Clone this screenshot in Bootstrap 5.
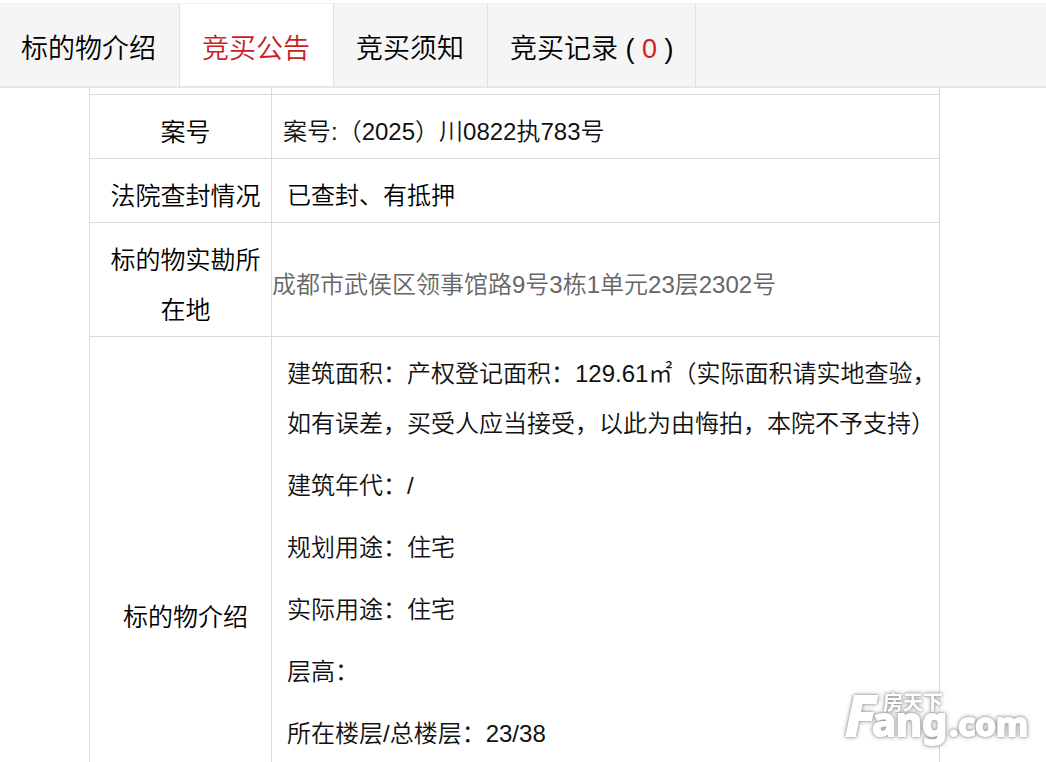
<!DOCTYPE html>
<html lang="zh-CN">
<head>
<meta charset="utf-8">
<meta name="viewport" content="width=device-width, initial-scale=1">
<title>竞买公告</title>
<link href="https://cdn.jsdelivr.net/npm/bootstrap@5.3.0/dist/css/bootstrap.min.css" rel="stylesheet">
<style>
  body { font-family: "Liberation Sans", "Noto Sans CJK SC", sans-serif; color: #111; font-size: 24px; line-height: 50px; font-weight: 350; }
  .notice-tabs { background: #f5f5f5; border-top: 1px solid #eee; border-bottom: 2px solid #e6e6e6; margin-top: 3px; }
  .notice-tabs .nav-link { font-size: 27px; line-height: 40px; padding: 25px 23px 17px 22px; color: #000; border: 0; border-right: 1px solid #e2e2e2; border-radius: 0; white-space: pre; }
  .notice-tabs .nav-item:first-child .nav-link { padding-left: 21px; }
  .notice-tabs .nav-item:last-child .nav-link { padding-right: 21px; }
  .notice-tabs .nav-link.active { background: #fff; color: #c9211e; margin-bottom: -1px; }
  .notice-tabs .count { color: #d3201c; }
  .notice-body { padding: 0 106px 0 89px; }
  .notice-table { border-collapse: collapse; table-layout: fixed; }
  .notice-table th, .notice-table td { border: 1px solid #dadada; border-top: 0; padding: 12px 0 1px 15px; vertical-align: middle; }
  .notice-table th { width: 182px; padding-left: 10px; font-size: 25px; font-weight: 350; text-align: center; color: #000; }
  .notice-table tr.row-end > * { padding: 0; height: 6px; }
  .notice-table td.case-no { padding-left: 11px; }
  .notice-table td.address { padding-left: 0; color: #666; }
  .notice-table td.details { padding-bottom: 116px; }
  .details p { margin-bottom: 12px; }
  .watermark { right: 12px; bottom: 8px; filter: drop-shadow(0 0 1px #999) drop-shadow(0 0 2px #aaa); }
</style>
</head>
<body>
<div class="vh-100 overflow-hidden d-flex flex-column position-relative">
  <nav class="notice-tabs flex-shrink-0">
    <ul class="nav">
      <li class="nav-item"><a class="nav-link" href="#intro">标的物介绍</a></li>
      <li class="nav-item"><a class="nav-link active" href="#notice" aria-current="page">竞买公告</a></li>
      <li class="nav-item"><a class="nav-link" href="#rules">竞买须知</a></li>
      <li class="nav-item"><a class="nav-link" href="#records">竞买记录 ( <span class="count">0</span> )</a></li>
    </ul>
  </nav>
  <main class="notice-body" id="notice">
    <table class="notice-table w-100">
      <tbody>
        <tr class="row-end"><th></th><td></td></tr>
        <tr><th scope="row">案号</th><td class="case-no">案号:（2025）川0822执783号</td></tr>
        <tr><th scope="row">法院查封情况</th><td class="text-black">已查封、有抵押</td></tr>
        <tr><th scope="row">标的物实勘所在地</th><td class="address">成都市武侯区领事馆路9号3栋1单元23层2302号</td></tr>
        <tr>
          <th scope="row">标的物介绍</th>
          <td class="details">
            <p>建筑面积：产权登记面积：129.61㎡（实际面积请实地查验，如有误差，买受人应当接受，以此为由悔拍，本院不予支持）</p>
            <p>建筑年代：/</p>
            <p>规划用途：住宅</p>
            <p>实际用途：住宅</p>
            <p>层高：</p>
            <p>所在楼层/总楼层：23/38</p>
          </td>
        </tr>
      </tbody>
    </table>
  </main>
  <svg class="watermark position-absolute" width="192" height="84" viewBox="0 -16 192 84" role="img" aria-label="房天下 Fang.com">
    <g fill="#fff" stroke="#fff" stroke-width="2" font-family="'Noto Sans', sans-serif" font-weight="700">
      <text x="3" y="50" font-size="56" font-style="italic">F</text>
      <text x="30" y="50" font-size="40">ang</text>
      <text x="107" y="50" font-size="33">.com</text>
      <text x="41" y="24" font-size="20" stroke="none" font-family="'Noto Sans CJK SC', sans-serif">房天下</text>
    </g>
  </svg>
</div>
<script src="https://cdn.jsdelivr.net/npm/bootstrap@5.3.0/dist/js/bootstrap.bundle.min.js"></script>
</body>
</html>
